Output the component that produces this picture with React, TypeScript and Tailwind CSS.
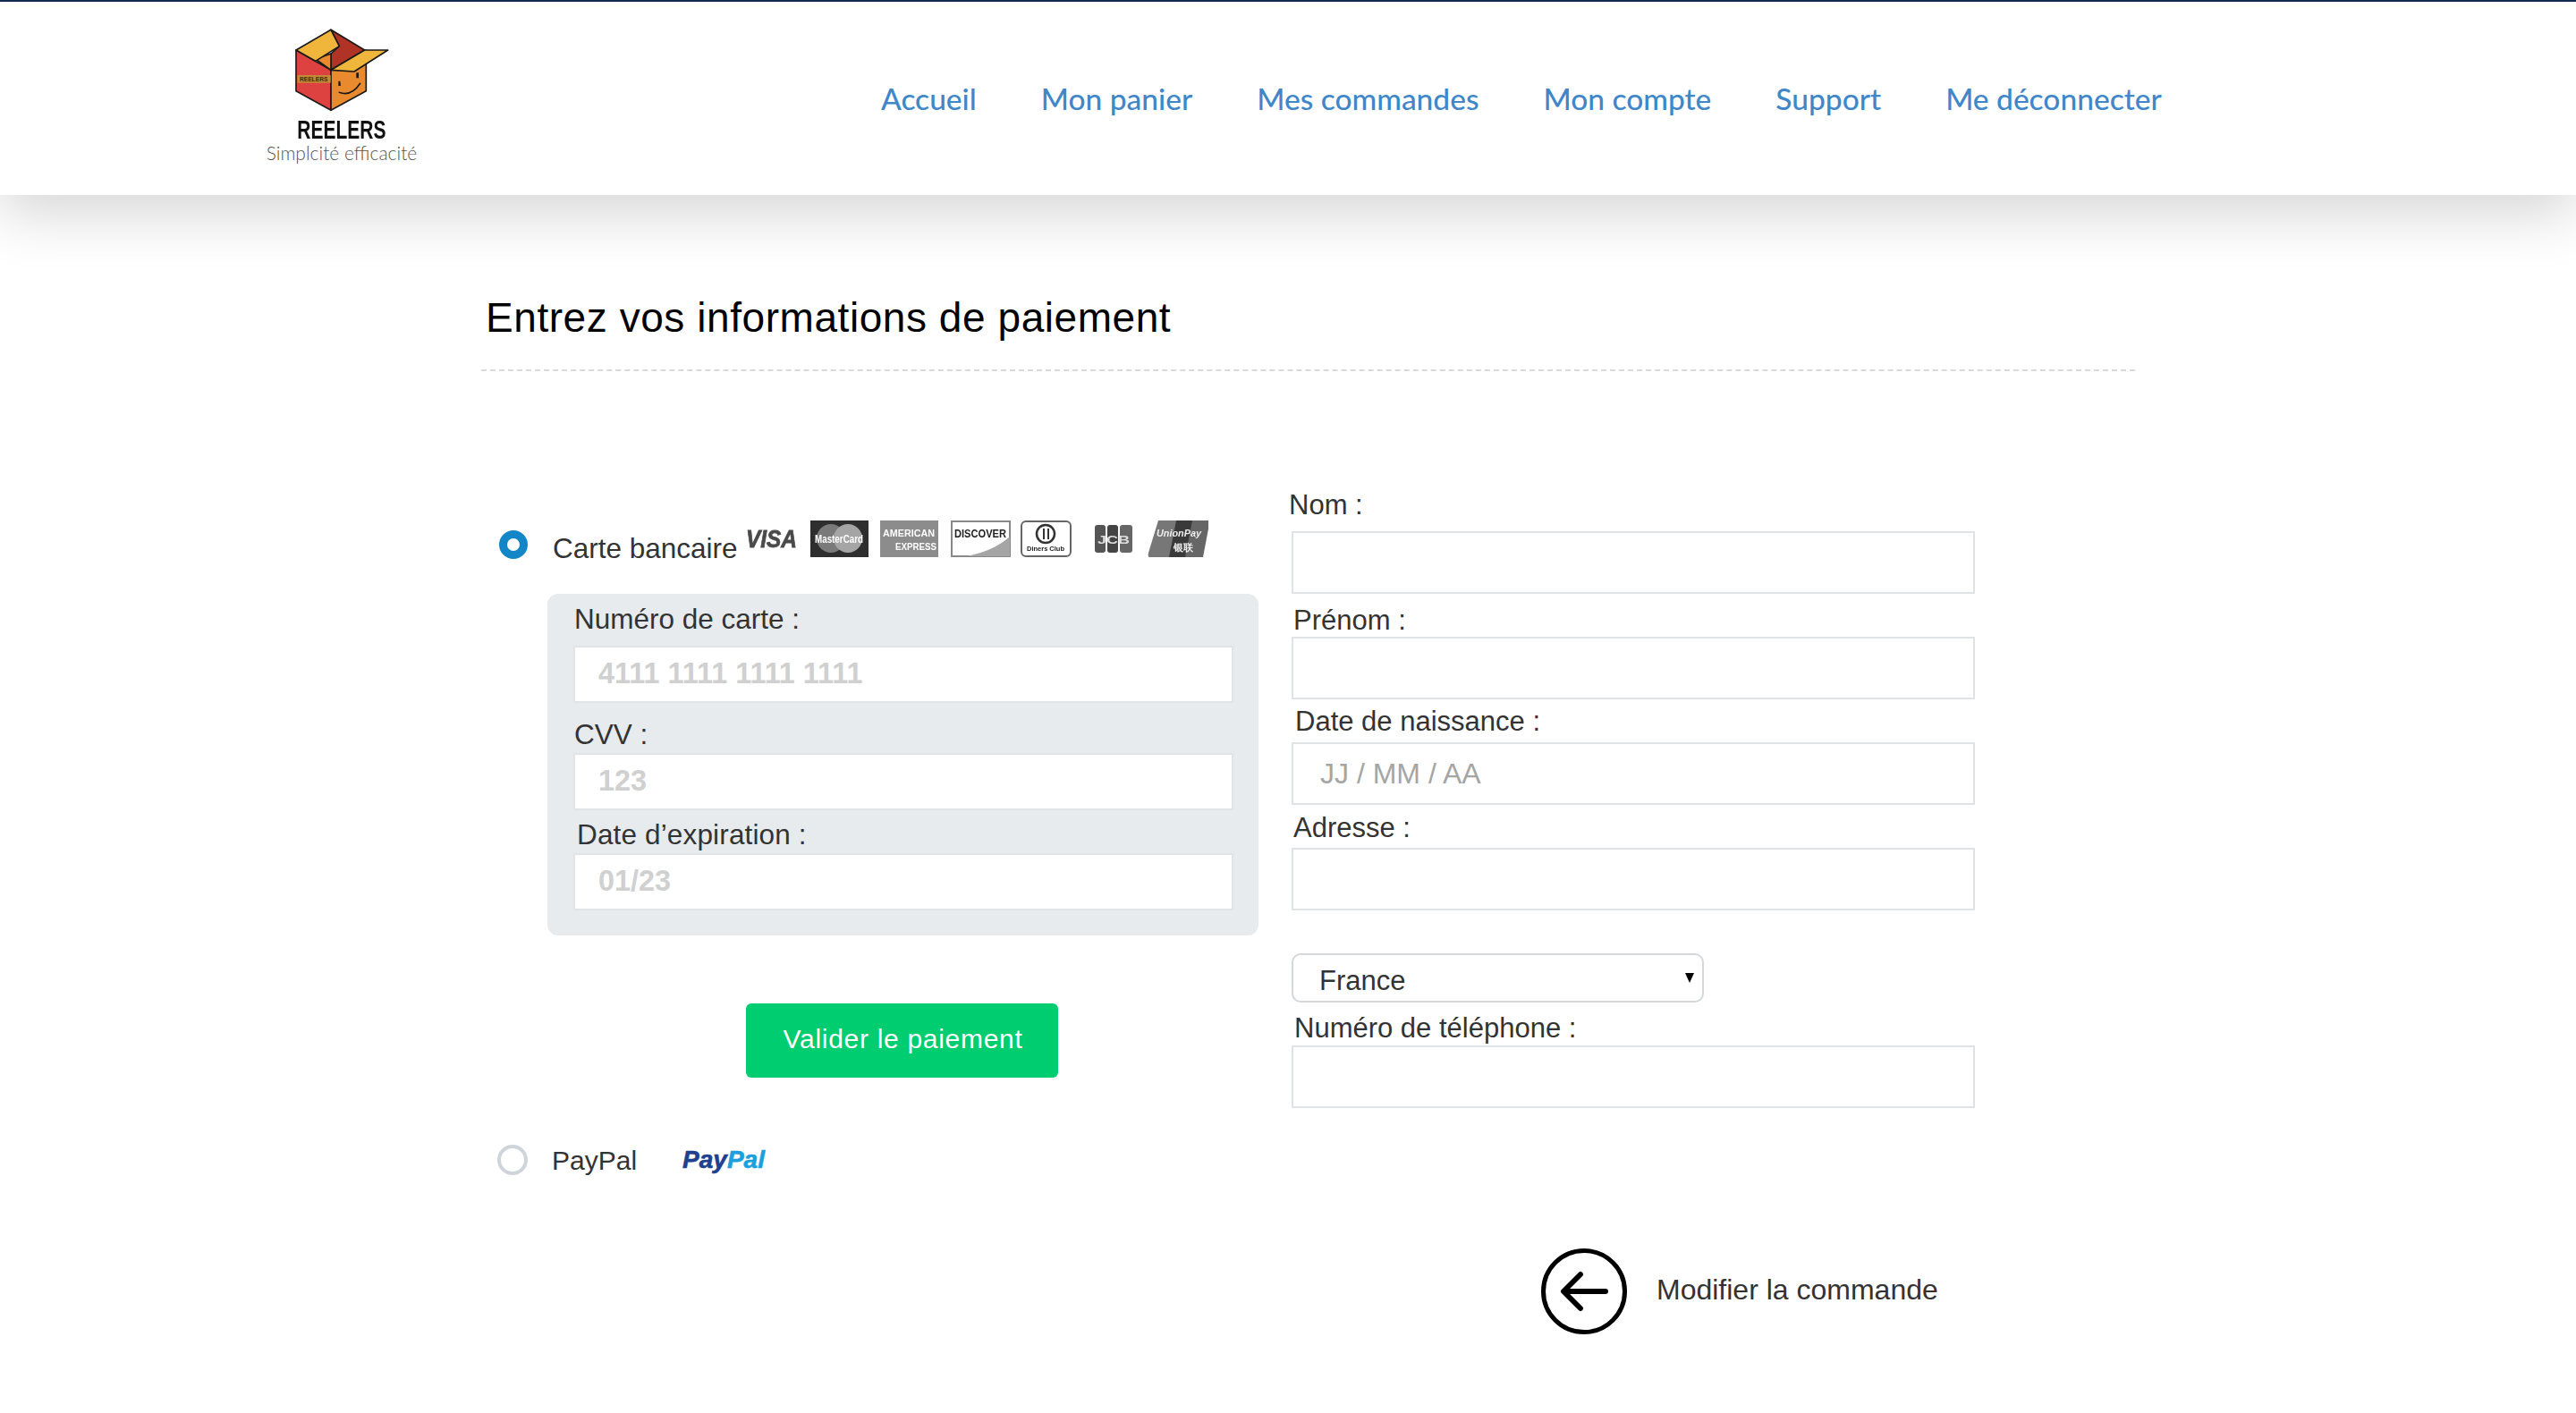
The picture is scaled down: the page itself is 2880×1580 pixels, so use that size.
const sans = "font-['Liberation_Sans',Arial,sans-serif]";
const labelClass = `block h-9 leading-[34px] text-[31.5px] text-[#333] ${sans}`;
const rightLabel = `block h-9 leading-[37px] text-[31px] text-[#333] ${sans}`;
const inputClass = `block w-[738px] border-2 border-[#e0e4e7] bg-white pr-[25px] pb-[2px] pl-[26px] text-[32.4px] font-bold placeholder:text-[#d0d0d0] outline-none ${sans}`;
const rightInput = `block w-[764px] border-2 border-[#dfe3e6] bg-white px-[30px] text-[32px] placeholder:text-[#a5a5a5] outline-none ${sans}`;

const links = ["Accueil", "Mon panier", "Mes commandes", "Mon compte", "Support", "Me déconnecter"];

function BoxLogo() {
  return (
    <svg width="120" height="100" viewBox="180 84 360 300">
      <g stroke="#1a1a1a" strokeWidth="5" strokeLinejoin="round">
        <path d="M210 168 L327 235 L327 370 L210 305 Z" fill="#dd4240" />
        <path d="M327 235 L445 168 L445 305 L327 370 Z" fill="#ea8a2e" />
        <path d="M327 100 L440 168 L327 235 L327 180 L355 155 Z" fill="#b03325" />
        <path d="M275 198 L327 180 L327 235 Z" fill="#ea8a2e" />
        <path d="M210 168 L327 100 L355 155 L275 205 Z" fill="#f0b63c" />
        <path d="M327 235 L440 168 L518 168 L405 240 Z" fill="#f0b63c" />
      </g>
      <rect x="214" y="252" width="112" height="26" fill="#c58a35" />
      <text x="269" y="272" textAnchor="middle" fontSize="20" fontWeight="700" fill="#3d2a10" fontFamily="Liberation Sans">REELERS</text>
      <path d="M352 288 L360 288 L358 272 L352 272 Z M412 262 L420 262 L420 244 L412 244 Z" fill="#1a1a1a" />
      <path d="M355 310 Q395 325 425 280" fill="none" stroke="#1a1a1a" strokeWidth="5" strokeLinecap="round" />
    </svg>
  );
}

function CardLogos() {
  return (
    <svg width="520" height="41" viewBox="0 0 520 41" className="blur-[0.7px]" fontFamily="Liberation Sans">
      <text x="3" y="30" fontSize="28" fontWeight="700" fontStyle="italic" fill="#4a4a4a" stroke="#4a4a4a" strokeWidth="0.8" textLength="57" lengthAdjust="spacingAndGlyphs">VISA</text>
      <rect x="75" y="0" width="65" height="41" fill="#2e2e2e" />
      <circle cx="98" cy="20" r="16" fill="#7a7a7a" />
      <circle cx="117" cy="20" r="16" fill="#a5a5a5" />
      <text x="107" y="25" textAnchor="middle" fontSize="12" fontWeight="700" fill="#fff" textLength="54" lengthAdjust="spacingAndGlyphs">MasterCard</text>
      <rect x="153" y="0" width="65" height="41" fill="#8c8c8c" />
      <text x="185" y="18" textAnchor="middle" fontSize="11" fontWeight="700" fill="#fff" textLength="58" lengthAdjust="spacingAndGlyphs">AMERICAN</text>
      <text x="193" y="33" textAnchor="middle" fontSize="11" fontWeight="700" fill="#fff" textLength="46" lengthAdjust="spacingAndGlyphs">EXPRESS</text>
      <rect x="233" y="1" width="65" height="39" fill="#fff" stroke="#888" strokeWidth="2" />
      <path d="M298 18 L298 40 L250 40 Q280 34 298 18 Z" fill="#a5a5a5" />
      <text x="265" y="19" textAnchor="middle" fontSize="12" fontWeight="700" fill="#222" textLength="58" lengthAdjust="spacingAndGlyphs">DISCOVER</text>
      <rect x="311" y="1" width="55" height="39" rx="5" fill="#fff" stroke="#666" strokeWidth="2" />
      <circle cx="338" cy="15" r="10" fill="#fff" stroke="#333" strokeWidth="2.5" />
      <rect x="335" y="9" width="2" height="12" fill="#333" />
      <rect x="340" y="9" width="2" height="12" fill="#333" />
      <text x="338" y="34" textAnchor="middle" fontSize="8" fontWeight="700" fill="#222" textLength="42" lengthAdjust="spacingAndGlyphs">Diners Club</text>
      <rect x="393" y="5" width="12" height="31" rx="3" fill="#555" />
      <rect x="407" y="5" width="12" height="31" rx="3" fill="#444" />
      <rect x="421" y="5" width="14" height="31" rx="3" fill="#666" />
      <text x="414" y="26" textAnchor="middle" fontSize="13" fontWeight="700" fill="#ddd" textLength="36" lengthAdjust="spacingAndGlyphs">JCB</text>
      <path d="M464 0 H486 L478 41 H454 Q452 41 453 36 Z" fill="#777" />
      <path d="M484 0 H504 L496 41 H476 Z" fill="#3a3a3a" />
      <path d="M502 0 H520 Q522 0 521 4 L514 41 H494 Z" fill="#666" />
      <text x="487" y="18" textAnchor="middle" fontSize="11" fontWeight="700" fontStyle="italic" fill="#eee" textLength="50" lengthAdjust="spacingAndGlyphs">UnionPay</text>
      <text x="492" y="34" textAnchor="middle" fontSize="11" fontWeight="700" fill="#eee">银联</text>
    </svg>
  );
}

function Header() {
  return (
    <header className="relative flex h-[218px] items-start border-t-2 border-[#14284b] bg-white shadow-[0_22px_60px_rgba(0,0,0,0.16)]">
      <div className="ml-[297px] flex w-[170px] flex-col items-center pt-[26px]">
        <div className="-ml-[3px]">
          <BoxLogo />
        </div>
        <span className="mt-[4px] h-[26px] scale-x-[0.7] text-[30px] leading-[26px] font-bold text-[#111] font-['Liberation_Sans',Arial,sans-serif]">REELERS</span>
        <span className="mt-[3px] h-[20px] text-[21px] leading-[20px] font-light whitespace-nowrap text-[#555] font-['Lato',sans-serif]">Simplcité efficacité</span>
      </div>
      <nav className="ml-[518px] flex gap-[72px] pt-[88px] font-['Lato',sans-serif] text-[33.5px] leading-10 font-medium text-[#3f87c9]">
        {links.map((l) => (
          <a key={l} href="#" className="whitespace-nowrap">{l}</a>
        ))}
      </nav>
    </header>
  );
}

function CardPanel() {
  return (
    <div className="mt-[41px] ml-[57px] w-[795px] rounded-[12px] bg-[#e8ebee] pt-[11px] pr-[28px] pb-[28px] pl-[29px]">
      <label className={`ml-[1px] ${labelClass}`}>Numéro de carte :</label>
      <input className={`mt-[11px] h-[64px] ${inputClass}`} placeholder="4111 1111 1111 1111" />
      <label className={`mt-[18px] ml-[1px] ${labelClass}`}>CVV :</label>
      <input className={`mt-[2px] h-[64px] ${inputClass}`} placeholder="123" />
      <label className={`mt-[10px] ml-[4px] tracking-[0.15px] ${labelClass}`}>Date d’expiration :</label>
      <input className={`mt-[2px] h-[64px] ${inputClass}`} placeholder="01/23" />
    </div>
  );
}

function LeftColumn() {
  return (
    <div className="mt-[167px] w-[885px] shrink-0">
      <div className="flex h-[41px] items-start">
        <span className="mt-[11px] ml-[3px] h-[32px] w-[32px] rounded-full border-[9px] border-[#1286c6] bg-white blur-[0.5px]" />
        <span className={`mt-[13px] ml-[28px] w-[213px] leading-9 text-[31.5px] text-[#333] ${sans}`}>Carte bancaire</span>
        <CardLogos />
      </div>
      <CardPanel />
      <button className={`mt-[76px] ml-[279px] block h-[83px] w-[349px] rounded-[6px] bg-[#00cc70] pb-[4px] pl-[2px] text-[30px] tracking-[0.7px] text-white ${sans}`}>
        Valider le paiement
      </button>
      <div className="mt-[75px] flex h-[34px] items-center">
        <span className="ml-[1px] h-[34px] w-[34px] rounded-full border-[4px] border-[#ced4da] bg-white" />
        <span className={`ml-[27px] text-[30px] text-[#333] ${sans}`}>PayPal</span>
        <span className={`ml-[51px] text-[28px] font-bold italic [-webkit-text-stroke:0.6px] ${sans}`}>
          <span className="text-[#1f3f8f]">Pay</span>
          <span className="text-[#1ba0dd]">Pal</span>
        </span>
      </div>
    </div>
  );
}

function RightColumn() {
  return (
    <div className="mt-[131px] w-[770px]">
      <label className={`ml-[1px] ${rightLabel}`}>Nom :</label>
      <input className={`mt-[12px] ml-[4px] h-[70px] ${rightInput}`} />
      <label className={`mt-[11px] ml-[6px] ${rightLabel}`}>Prénom :</label>
      <input className={`mt-[1px] ml-[4px] h-[70px] ${rightInput}`} />
      <label className={`mt-[6px] ml-[8px] ${rightLabel}`}>Date de naissance :</label>
      <input className={`mt-[6px] ml-[4px] h-[70px] ${rightInput}`} placeholder="JJ / MM / AA" />
      <label className={`mt-[7px] ml-[6px] ${rightLabel}`}>Adresse :</label>
      <input className={`mt-[5px] ml-[4px] h-[70px] ${rightInput}`} />
      <div className="relative mt-[48px] ml-[4px] flex h-[55px] w-[461px] items-center rounded-[10px] border-2 border-[#d5d8db] bg-white pr-[9px] pl-[29px]">
        <span className={`mt-[8px] text-[31px] text-[#333] ${sans}`}>France</span>
        <svg width="10" height="11" viewBox="0 0 10 11" className="ml-auto">
          <path d="M0 0 H10 L5 11 Z" fill="#000" />
        </svg>
      </div>
      <label className={`mt-[8px] ml-[7px] leading-[41px]! ${rightLabel}`}>Numéro de téléphone :</label>
      <input className={`mt-[4px] ml-[4px] h-[70px] ${rightInput}`} />
      <a href="#" className="mt-[157px] ml-[283px] flex items-center gap-[33px]">
        <svg width="96" height="96" viewBox="0 0 96 96" fill="none" stroke="#000" strokeLinecap="round" strokeLinejoin="round">
          <circle cx="48" cy="48" r="45.5" strokeWidth="5" />
          <path d="M72 48 H26 M44 29 L25 48 L44 67" strokeWidth="6" />
        </svg>
        <span className={`-mt-[5px] text-[32px] text-[#333] ${sans}`}>Modifier la commande</span>
      </a>
    </div>
  );
}

export default function App() {
  return (
    <main className="min-h-[1580px] bg-white">
      <Header />
      <div className="ml-[538px] w-[1849px]">
        <h1 className={`ml-[5px] pt-[108px] text-[46px] leading-[58px] tracking-[0.56px] text-black ${sans}`}>Entrez vos informations de paiement</h1>
        <div className="mt-[29px] border-t-2 border-dashed border-[#d9d9d9]" />
        <div className="flex pl-[17px]">
          <LeftColumn />
          <RightColumn />
        </div>
      </div>
    </main>
  );
}
